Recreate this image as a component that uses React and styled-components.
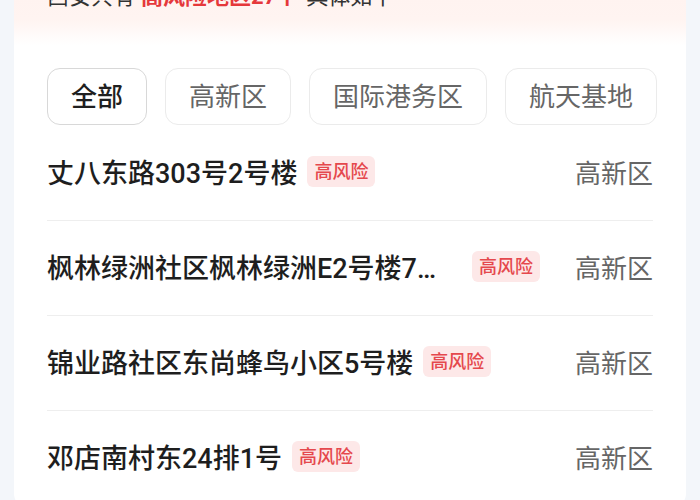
import React, { useState } from "react";
import styled, { createGlobalStyle } from "styled-components";

const GlobalStyle = createGlobalStyle`
  html, body {
    margin: 0;
    padding: 0;
    background: #f3f6fa;
    font-family: Roboto, "Noto Sans CJK SC", "Noto Sans", sans-serif;
    overflow: hidden;
  }
`;

const Page = styled.div`
  margin-top: -45px;
  padding: 0 14px;
`;

const Card = styled.div`
  background: #ffffff;
  border-radius: 12px;
  overflow: hidden;
`;

const Banner = styled.div`
  padding: 27px 33px 33px;
  background: linear-gradient(180deg, #fff1ee 0%, #fff4f1 72%, #ffffff 100%);
  font-size: 22px;
  line-height: 30px;
  color: #333;
  white-space: nowrap;
`;

const Em = styled.span`
  color: #e5383b;
  font-weight: 700;
  margin: 0 8px 0 6px;
`;

const Tabs = styled.div`
  display: flex;
  gap: 18px;
  padding: 23px 0 0 33px;
  overflow: hidden;
`;

const Tab = styled.button`
  flex: none;
  height: 57px;
  padding: 0 23px;
  border-radius: 13px;
  border: 1px solid ${(p) => (p.$active ? "#d8d8d8" : "#ebebeb")};
  background: #fff;
  font-family: inherit;
  font-size: 26px;
  line-height: 1;
  font-weight: ${(p) => (p.$active ? 500 : 400)};
  color: ${(p) => (p.$active ? "#1f1f1f" : "#666")};
  cursor: pointer;
`;

const List = styled.div`
  padding: 1px 33px 0;
`;

const Row = styled.div`
  display: flex;
  align-items: center;
  height: 95px;
  padding-bottom: 4px;
  box-sizing: border-box;
  border-bottom: 1px solid #eeeeee;
`;

const Title = styled.span`
  max-width: 415px;
  font-size: 27px;
  font-weight: 500;
  color: #1e1e1e;
  white-space: nowrap;
  overflow: hidden;
  text-overflow: ellipsis;
`;

const Badge = styled.span`
  flex: none;
  margin-left: 10px;
  padding: 0 7px;
  height: 31px;
  line-height: 31px;
  border-radius: 6px;
  background: #fde8e8;
  color: #e5484d;
  font-size: 18px;
  font-weight: 500;
`;

const District = styled.span`
  flex: none;
  margin-left: auto;
  font-size: 26px;
  color: #666;
`;

const tabs = ["全部", "高新区", "国际港务区", "航天基地"];

const places = [
  { name: "丈八东路303号2号楼", district: "高新区" },
  { name: "枫林绿洲社区枫林绿洲E2号楼7单元", district: "高新区" },
  { name: "锦业路社区东尚蜂鸟小区5号楼", district: "高新区" },
  { name: "邓店南村东24排1号", district: "高新区" },
];

export default function App() {
  const [active, setActive] = useState(0);
  return (
    <>
      <GlobalStyle />
      <Page>
        <Card>
          <Banner>
            西安共有<Em>高风险地区27个</Em>具体如下
          </Banner>
          <Tabs>
            {tabs.map((t, i) => (
              <Tab key={t} $active={i === active} onClick={() => setActive(i)}>
                {t}
              </Tab>
            ))}
          </Tabs>
          <List>
            {places.map((p) => (
              <Row key={p.name}>
                <Title>{p.name}</Title>
                <Badge>高风险</Badge>
                <District>{p.district}</District>
              </Row>
            ))}
          </List>
        </Card>
      </Page>
    </>
  );
}
